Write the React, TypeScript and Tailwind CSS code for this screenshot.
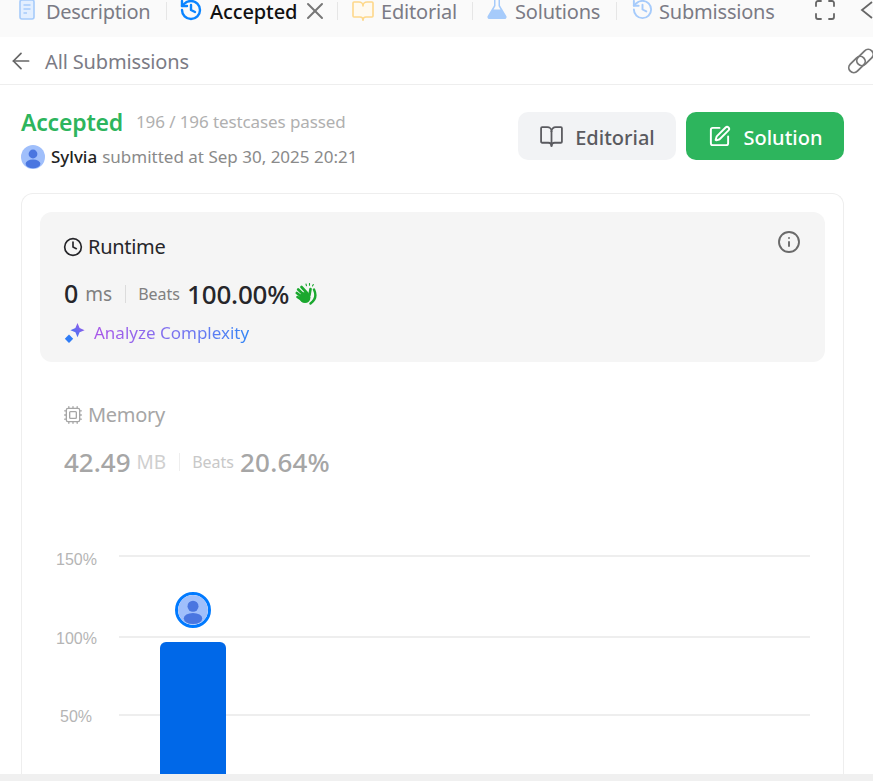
import { ArrowLeft, BookOpen, Clock, Cpu, Info, Maximize, SquarePen, X, History } from 'lucide-react';

const font = 'font-["Noto_Sans",sans-serif]';

const Sep = ({ className }: { className: string }) => <div className={`h-[18px] w-px shrink-0 bg-[#e6e6e6] ${className}`} />;

// filled user avatar used next to the name and over the bar
const Avatar = ({ size }: { size: number }) => (
  <svg width={size} height={size} viewBox="0 0 24 24">
    <circle cx="12" cy="12" r="12" fill="#a0bffb" />
    <circle cx="12" cy="9" r="4.4" fill="#4a76e0" />
    <ellipse cx="12" cy="18.8" rx="7.4" ry="4.4" fill="#4a76e0" />
  </svg>
);

const DescIcon = () => (
  <svg width="16" height="22" viewBox="0 0 16 22" fill="none" className="mt-[-1px] shrink-0">
    <rect x="1" y="1" width="14" height="19" rx="2" fill="#e3efff" stroke="#a6cbfb" strokeWidth="1.6" />
    <path d="M4.5 6h7M4.5 10h7M4.5 14h3.5" stroke="#a6cbfb" strokeWidth="1.6" />
  </svg>
);

const FlaskIcon = () => (
  <svg width="20" height="22" viewBox="0 0 20 22" className="mt-[-2px]">
    <path d="M6 0h8v1.5h-1v6l6.3 10.4c.8 1.4-.2 3.1-1.8 3.1H2.5C.9 21-.1 19.300.7 17.900L7 7.500v-6H6z" fill="#a6cbfb" />
    <path d="M8.500 1.500h3v6.500l2 3.500h-7l2-3.500z" fill="#fafafa" />
  </svg>
);

const Chain = () => (
  <svg width="28" height="28" viewBox="0 0 28 28" fill="none" stroke="#777" strokeWidth="1.8" className="ml-auto mr-[-2px] mt-[2px]">
    <rect x="0.500" y="12.500" width="19" height="10" rx="5" transform="rotate(-45 10 17.500)" />
    <rect x="8.500" y="5.500" width="19" height="10" rx="5" transform="rotate(-45 18 10.500)" />
  </svg>
);

const Clap = () => (
  <svg width="23" height="22" viewBox="0 0 23 22" fill="none" stroke="#1ba82f" strokeLinecap="round" className="ml-[6px]">
    <circle cx="10" cy="14.500" r="5.500" fill="#1ba82f" stroke="none" />
    <path d="M6.500 4 12 10M3.200 6.500 9 12M1.800 10 7 14M2.500 14 7 17M15.500 6 14.500 12" strokeWidth="2.600" />
    <path d="M19 6.500C21.500 12 20.500 17 15.500 20.500" strokeWidth="2.400" />
    <path d="M11.500 2.800 11 1M14.500 2.300V.500M17.500 3l.8-1.500" strokeWidth="1.100" />
  </svg>
);

const Sparkle = () => (
  <svg width="22" height="22" viewBox="0 0 22 22" className="mr-[8px]">
    <defs>
      <linearGradient id="sp" x1="0" y1="1" x2="1" y2="0">
        <stop offset="0" stopColor="#2f7cf6" />
        <stop offset="1" stopColor="#a855e8" />
      </linearGradient>
    </defs>
    <path d="M13.500 1l2.100 5 5 2.200-5 2.100-2.100 5-2.100-5-5-2.100 5-2.200z" fill="url(#sp)" />
    <path d="M5 12.500l4.200 4.200L5 21 .8 16.700z" fill="#2f7cf6" />
  </svg>
);

export default function App() {
  return (
    <div className={`flex h-[781px] w-[873px] flex-col overflow-hidden bg-white ${font}`}>
      {/* tabs */}
      <div className="flex h-[37px] shrink-0 items-start overflow-hidden bg-[#fafafa] pl-[19px] text-[20px] leading-[24px] text-[#7b7b85]">
        <DescIcon />
        <span className="ml-[11px] w-[104px] shrink-0 whitespace-nowrap tracking-[-0.3px]">Description</span>
        <Sep className="ml-[16px] mt-[2px]" />
        <History size={24} strokeWidth={2.4} className="ml-[12px] mt-[-2px] shrink-0 text-[#0a84ff]" />
        <span className="ml-[7px] w-[88px] shrink-0 whitespace-nowrap font-medium tracking-[-0.1px] text-[#111]">Accepted</span>
        <X size={28} strokeWidth={1.7} className="ml-[3px] mt-[-3px] shrink-0 text-[#777]" />
        <Sep className="ml-[8px] mt-[2px]" />
        <BookOpen size={24} strokeWidth={1.6} fill="#fffaf0" className="ml-[13px] mt-[-1px] shrink-0 text-[#fed88a]" />
        <span className="ml-[6px] w-[75px] shrink-0 whitespace-nowrap tracking-[-0.2px]">Editorial</span>
        <Sep className="ml-[16px] mt-[2px]" />
        <div className="ml-[14px] shrink-0"><FlaskIcon /></div>
        <span className="ml-[8px] w-[86px] shrink-0 whitespace-nowrap tracking-[-0.2px]">Solutions</span>
        <Sep className="ml-[15px] mt-[2px]" />
        <History size={23} strokeWidth={2} className="ml-[14px] mt-[-2px] shrink-0 text-[#a6cbfb]" />
        <span className="ml-[5px] w-[115px] shrink-0 whitespace-nowrap tracking-[-0.2px]">Submissions</span>
        <Maximize size={24} strokeWidth={1.8} className="ml-[39px] mt-[-2px] shrink-0 text-[#666]" />
        <svg width="14" height="18" viewBox="0 0 14 18" fill="none" stroke="#666" strokeWidth="1.8" className="ml-[23px] mt-[1px] shrink-0">
          <path d="M12 1 2 9l10 8" />
        </svg>
      </div>

      {/* back row */}
      <div className="flex h-[48px] shrink-0 items-center border-b border-[#eee] pl-[8px] pb-[2px]">
        <ArrowLeft size={26} strokeWidth={1.6} className="mt-[2px] text-[#666]" />
        <span className="ml-[11px] mt-[4px] text-[20px] tracking-[-0.15px] text-[#7b7b85]">All Submissions</span>
        <Chain />
      </div>

      {/* header */}
      <div className="flex h-[108px] shrink-0 justify-between pl-[21px] pr-[29px]">
        <div>
          <div className="mt-[21px] flex items-start">
            <span className="text-[23px] font-semibold leading-[32px] tracking-[-0.2px] text-[#2db55d]">Accepted</span>
            <span className="ml-[13px] mt-[4px] text-[17px] leading-[24px] tracking-[-0.1px] text-[#b0b0b0]">196 / 196 testcases passed</span>
          </div>
          <div className="mt-[6px] flex items-center">
            <Avatar size={24} />
            <span className="ml-[6px] text-[17px] font-medium text-[#222]">Sylvia</span>
            <span className="ml-[5px] text-[17px] text-[#8a8a8a]">submitted at Sep 30, 2025 20:21</span>
          </div>
        </div>
        <div className="mt-[27px] flex gap-[10px]">
          <div className="flex h-[48px] w-[158px] items-center justify-center rounded-[10px] bg-[#f2f3f5] text-[#5a5a5f]">
            <BookOpen size={25} strokeWidth={1.7} />
            <span className="ml-[11px] pt-[3px] text-[20px] font-medium">Editorial</span>
          </div>
          <div className="flex h-[48px] w-[158px] items-center justify-center rounded-[10px] bg-[#2db55d] text-white">
            <SquarePen size={23} strokeWidth={2} />
            <span className="ml-[13px] pt-[3px] text-[20px] font-medium">Solution</span>
          </div>
        </div>
      </div>

      {/* result card */}
      <div className="ml-[21px] w-[823px] min-h-0 flex-1 overflow-hidden rounded-t-[12px] border border-b-0 border-[#eee] pl-[18px] pr-[18px] pt-[18px]">
        <div className="relative h-[150px] rounded-[12px] bg-[#f5f5f5] pl-[24px] pt-[20px]">
          <div className="flex h-[30px] items-center text-[20px] tracking-[-0.3px] text-[#26262a]">
            <Clock size={20} strokeWidth={2} className="mr-[5px] ml-[-1px]" />
            Runtime
          </div>
          <Info size={24} strokeWidth={1.9} className="absolute right-[24px] top-[18px] text-[#6a6a6a]" />
          <div className="mt-[15px] flex h-[34px] items-center">
            <span className="text-[25px] font-medium text-[#26262a]">0</span>
            <span className="ml-[7px] text-[19px] text-[#808080]">ms</span>
            <div className="ml-[13px] h-[18px] w-px bg-[#dcdcdc]" />
            <span className="ml-[12px] text-[16px] text-[#808080]">Beats</span>
            <span className="ml-[7px] text-[26px] font-medium tracking-[-0.2px] text-[#26262a]">100.00%</span>
            <Clap />
          </div>
          <div className="mt-[10px] flex h-[24px] items-center">
            <Sparkle />
            <span className="bg-gradient-to-r from-[#a855e8] to-[#2f86f6] bg-clip-text text-[17px] text-transparent">Analyze Complexity</span>
          </div>
        </div>

        <div className="pl-[24px] pt-[38px]">
          <div className="flex h-[30px] items-center text-[20px] tracking-[-0.3px] text-[#a6a6a6]">
            <Cpu size={20} strokeWidth={1.6} className="mr-[5px] ml-[-1px]" />
            Memory
          </div>
          <div className="mt-[15px] flex h-[34px] items-center">
            <span className="text-[26px] font-medium text-[#a6a6a6]">42.49</span>
            <span className="ml-[6px] text-[19px] text-[#cfcfcf]">MB</span>
            <div className="ml-[13px] h-[18px] w-px bg-[#eeeeee]" />
            <span className="ml-[12px] text-[16px] text-[#c8c8c8]">Beats</span>
            <span className="ml-[6px] text-[26px] font-medium tracking-[0.2px] text-[#a6a6a6]">20.64%</span>
          </div>
        </div>

        {/* chart */}
        <div className={'relative mt-[61px] h-[260px] font-["Liberation_Sans",sans-serif] text-[16px] text-[#b5b5b5]'}>
          <span className="absolute left-[16px] top-[8px]">150%</span>
          <span className="absolute left-[16px] top-[87px]">100%</span>
          <span className="absolute left-[20px] top-[165px]">50%</span>
          <div className="absolute left-[79px] top-[15px] h-[2px] w-[691px] bg-[#eeeeee]" />
          <div className="absolute left-[79px] top-[96px] h-[2px] w-[691px] bg-[#eeeeee]" />
          <div className="absolute left-[79px] top-[174px] h-[2px] w-[691px] bg-[#eeeeee]" />
          <div className="absolute left-[120px] top-[102px] h-[200px] w-[66px] rounded-t-[6px] bg-[#0068e8]" />
          <div className="absolute left-[135px] top-[52px] flex h-[36px] w-[36px] items-center justify-center overflow-hidden rounded-full border-[3px] border-[#007aff]">
            <Avatar size={30} />
          </div>
        </div>
      </div>

      <div className="h-[7px] shrink-0 bg-[#f0f0f0]" />
    </div>
  );
}
